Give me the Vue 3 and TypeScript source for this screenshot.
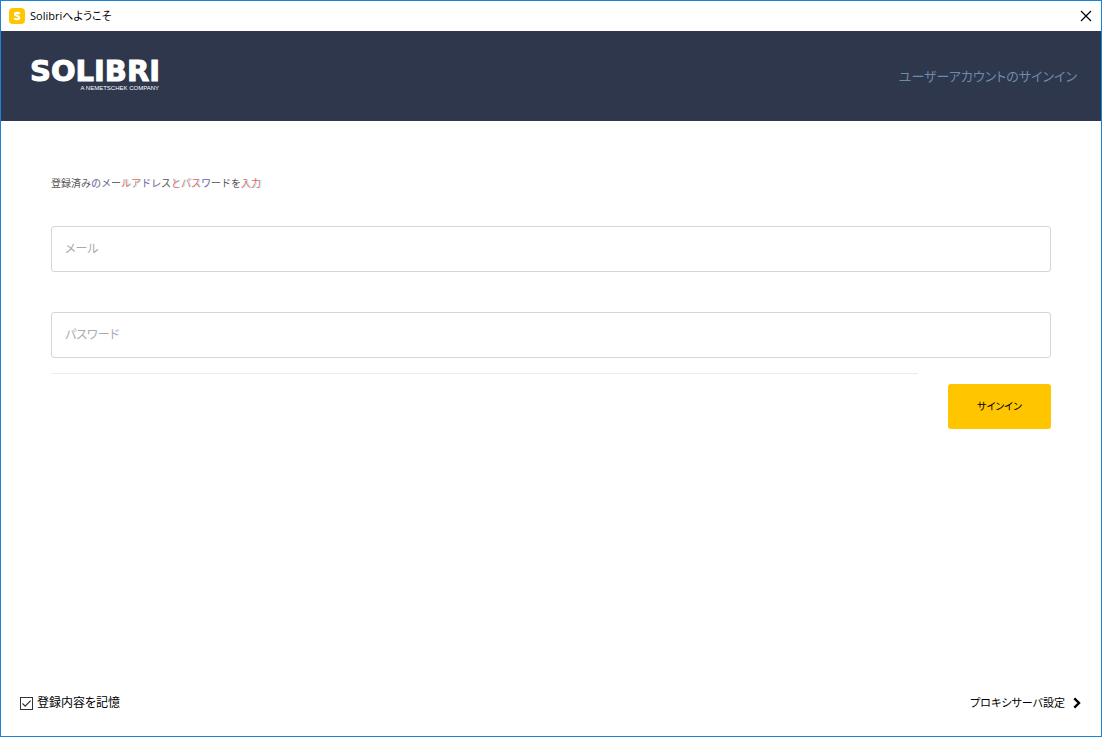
<script setup lang="ts">
import { ref } from 'vue'

interface Run {
  text: string
  tone: 'plain' | 'warm' | 'cool'
}

const email = ref('')
const password = ref('')
const remember = ref(true)

const intro: Run[] = [
  { text: '登録済み', tone: 'plain' },
  { text: 'のメ', tone: 'cool' },
  { text: 'ー', tone: 'plain' },
  { text: 'ルア', tone: 'warm' },
  { text: 'ドレ', tone: 'cool' },
  { text: 'ス', tone: 'plain' },
  { text: 'とパス', tone: 'warm' },
  { text: 'ワ', tone: 'cool' },
  { text: 'ードを', tone: 'plain' },
  { text: '入力', tone: 'warm' },
]
</script>

<template>
  <div class="window">
    <header class="titlebar">
      <svg class="app-icon" viewBox="0 0 16 16" aria-hidden="true">
        <rect width="16" height="16" rx="4" fill="#ffc600" />
        <path d="M10.9 5.7C9.8 4.7 6 4.3 6 6.2C6 8 10.3 7.3 10.3 9.6C10.3 11.8 6.4 11.6 5.1 10.3" fill="none" stroke="#fff" stroke-width="2.1" />
      </svg>
      <h1 class="title">Solibriへようこそ</h1>
      <button class="close" type="button" aria-label="閉じる">
        <svg viewBox="0 0 12 12" aria-hidden="true">
          <path d="M1 1L11 11M11 1L1 11" stroke="#000" stroke-width="1.2" />
        </svg>
      </button>
    </header>

    <div class="banner">
      <div class="brand">
        <span class="brand-name">SOLIBRI</span>
        <span class="brand-sub">A NEMETSCHEK COMPANY</span>
      </div>
      <h2 class="banner-title">ユーザーアカウントのサインイン</h2>
    </div>

    <form class="form" @submit.prevent>
      <p class="intro">
        <span v-for="(run, i) in intro" :key="i" :class="run.tone">{{ run.text }}</span>
      </p>
      <input v-model="email" class="field" type="email" placeholder="メール" aria-label="メール" />
      <input v-model="password" class="field" type="password" placeholder="パスワード" aria-label="パスワード" />
      <div class="actions">
        <hr class="rule" />
        <button class="submit" type="submit">サインイン</button>
      </div>
    </form>

    <footer class="footer">
      <label class="remember">
        <input v-model="remember" class="box" type="checkbox" />
        <span>登録内容を記憶</span>
      </label>
      <button class="proxy" type="button">
        <span>プロキシサーバ設定</span>
        <svg viewBox="0 0 8 12" aria-hidden="true">
          <path d="M1.3 1.3L6 6L1.3 10.7" fill="none" stroke="#000" stroke-width="2.4" />
        </svg>
      </button>
    </footer>
  </div>
</template>

<style>
body {
  margin: 0;
}
</style>

<style scoped>
.window {
  box-sizing: border-box;
  min-height: 100vh;
  display: flex;
  flex-direction: column;
  border: 1px solid #1883d7;
  background: #fff;
  color: #000;
  font-family: "Open Sans", "Noto Sans CJK JP", sans-serif;
  font-size: 12px;
  line-height: 16px;
  font-feature-settings: "palt";
}

button,
input {
  font: inherit;
  font-feature-settings: inherit;
  color: inherit;
}

button {
  padding: 0;
  border: 0;
  background: none;
  cursor: pointer;
}

.titlebar {
  display: flex;
  align-items: center;
  height: 30px;
  padding: 0 7px 0 8px;
}

.app-icon {
  width: 16px;
  height: 16px;
  margin-right: 5px;
}

.title {
  margin: 0;
  font-size: 11px;
  font-weight: 400;
}

.close {
  display: flex;
  margin-left: auto;
  padding: 2px;
}

.close svg {
  width: 12px;
  height: 12px;
}

.banner {
  display: flex;
  align-items: center;
  justify-content: space-between;
  height: 90px;
  padding: 0 24px 0 29px;
  background: #2f374c;
}

.brand {
  display: flex;
  flex-direction: column;
  align-items: flex-end;
  color: #fff;
}

.brand-name {
  font-family: "DejaVu Sans", sans-serif;
  font-size: 29px;
  font-weight: 700;
  line-height: 24px;
  -webkit-text-stroke: 1px #fff;
}

.brand-sub {
  padding-right: 1px;
  font-family: "Liberation Sans", Arial, sans-serif;
  font-size: 6px;
  line-height: 10px;
}

.banner-title {
  margin: 0;
  color: #6c8cab;
  font-size: 13px;
  font-weight: 400;
  line-height: 20px;
}

.form {
  display: flex;
  flex-direction: column;
  padding: 54px 50px 0;
}

.intro {
  margin: 0 0 35px;
  color: #555;
  font-size: 10px;
  font-feature-settings: normal;
}

.warm {
  color: #f45f5f;
  text-shadow: 1px 0 #8ff4f8;
}

.cool {
  color: #6464e8;
  text-shadow: 1px 0 #f8f480;
}

.field {
  box-sizing: border-box;
  width: 100%;
  height: 46px;
  margin-bottom: 40px;
  padding: 0 13px 2px;
  border: 1px solid #cfd8dc;
  border-radius: 3px;
  background: #fff;
  font-size: 12px;
}

.field:last-of-type {
  margin-bottom: 15px;
}

.field::placeholder {
  color: #a4abb3;
  opacity: 1;
}

.actions {
  display: flex;
  gap: 30px;
}

.rule {
  flex: 1;
  height: 1px;
  margin: 0;
  border: 0;
  background: #ececec;
}

.submit {
  width: 103px;
  height: 45px;
  margin-top: 11px;
  padding-bottom: 2px;
  border-radius: 3px;
  background: #ffc600;
  font-size: 10px;
}

.footer {
  display: flex;
  align-items: center;
  justify-content: space-between;
  margin-top: auto;
  padding: 0 20px 25px 19px;
}

.remember {
  display: flex;
  align-items: center;
  gap: 4px;
}

.box {
  appearance: none;
  box-sizing: border-box;
  width: 13px;
  height: 13px;
  margin: 0;
  border: 1px solid #333;
  background: #fff;
}

.box:checked {
  background: #fff url("data:image/svg+xml,%3Csvg xmlns='http://www.w3.org/2000/svg' viewBox='0 0 11 11'%3E%3Cpath d='M1.5 5.5L4.2 8.2L9.6 2.6' fill='none' stroke='%23333' stroke-width='1.2'/%3E%3C/svg%3E") center / 11px 11px no-repeat;
}

.proxy {
  display: flex;
  align-items: center;
  gap: 8px;
  font-size: 11px;
}

.proxy svg {
  width: 8px;
  height: 12px;
}
</style>
